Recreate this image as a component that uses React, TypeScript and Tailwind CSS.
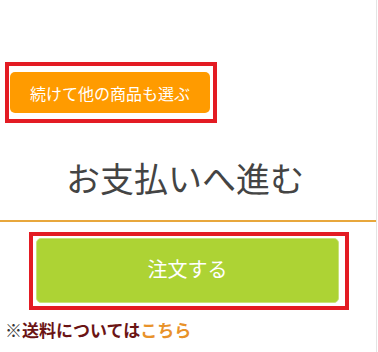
import React from "react";

export default function App() {
  return (
    <div
      className="w-[378px] h-[352px] bg-white overflow-hidden"
      style={{ fontFamily: '"Noto Sans CJK JP", "Noto Sans", sans-serif' }}
    >
      <div className="w-[377px] h-[352px] border-r border-[#e4e4e4] flex flex-col">
        <div className="mt-[62px] ml-[5px] w-[212px] h-[61px] border-4 border-[#e31b23] pl-px pt-[6px]">
          <div className="w-[200px] h-[41px] rounded-[5px] bg-[#ff9b00] flex items-center justify-center text-white text-[16px] leading-none">
            続けて他の商品も選ぶ
          </div>
        </div>
        <div className="mt-[35px] h-[40px] flex items-center justify-center text-[34px] leading-[40px] text-[#444444] pr-[6px]">
          お支払いへ進む
        </div>
        <div className="mt-[22px] h-[2px] bg-[#e8a73c]" />
        <div className="mt-[10px] ml-[29px] w-[320px] h-[78px] border-4 border-[#e31b23] pl-[3px] pt-[2px]">
          <div className="w-[303px] h-[65px] rounded-[5px] bg-[#add334] border border-[#c9e27a] flex items-center justify-center text-white text-[20px] leading-none pb-[4px]">
            注文する
          </div>
        </div>
        <div className="mt-[8px] ml-[5px] text-[17px] leading-[24px] font-bold">
          <span className="text-[#333333]">※</span>
          <span className="text-[#6b1414]">送料については</span>
          <span className="text-[#e8922a]">こちら</span>
        </div>
      </div>
    </div>
  );
}
